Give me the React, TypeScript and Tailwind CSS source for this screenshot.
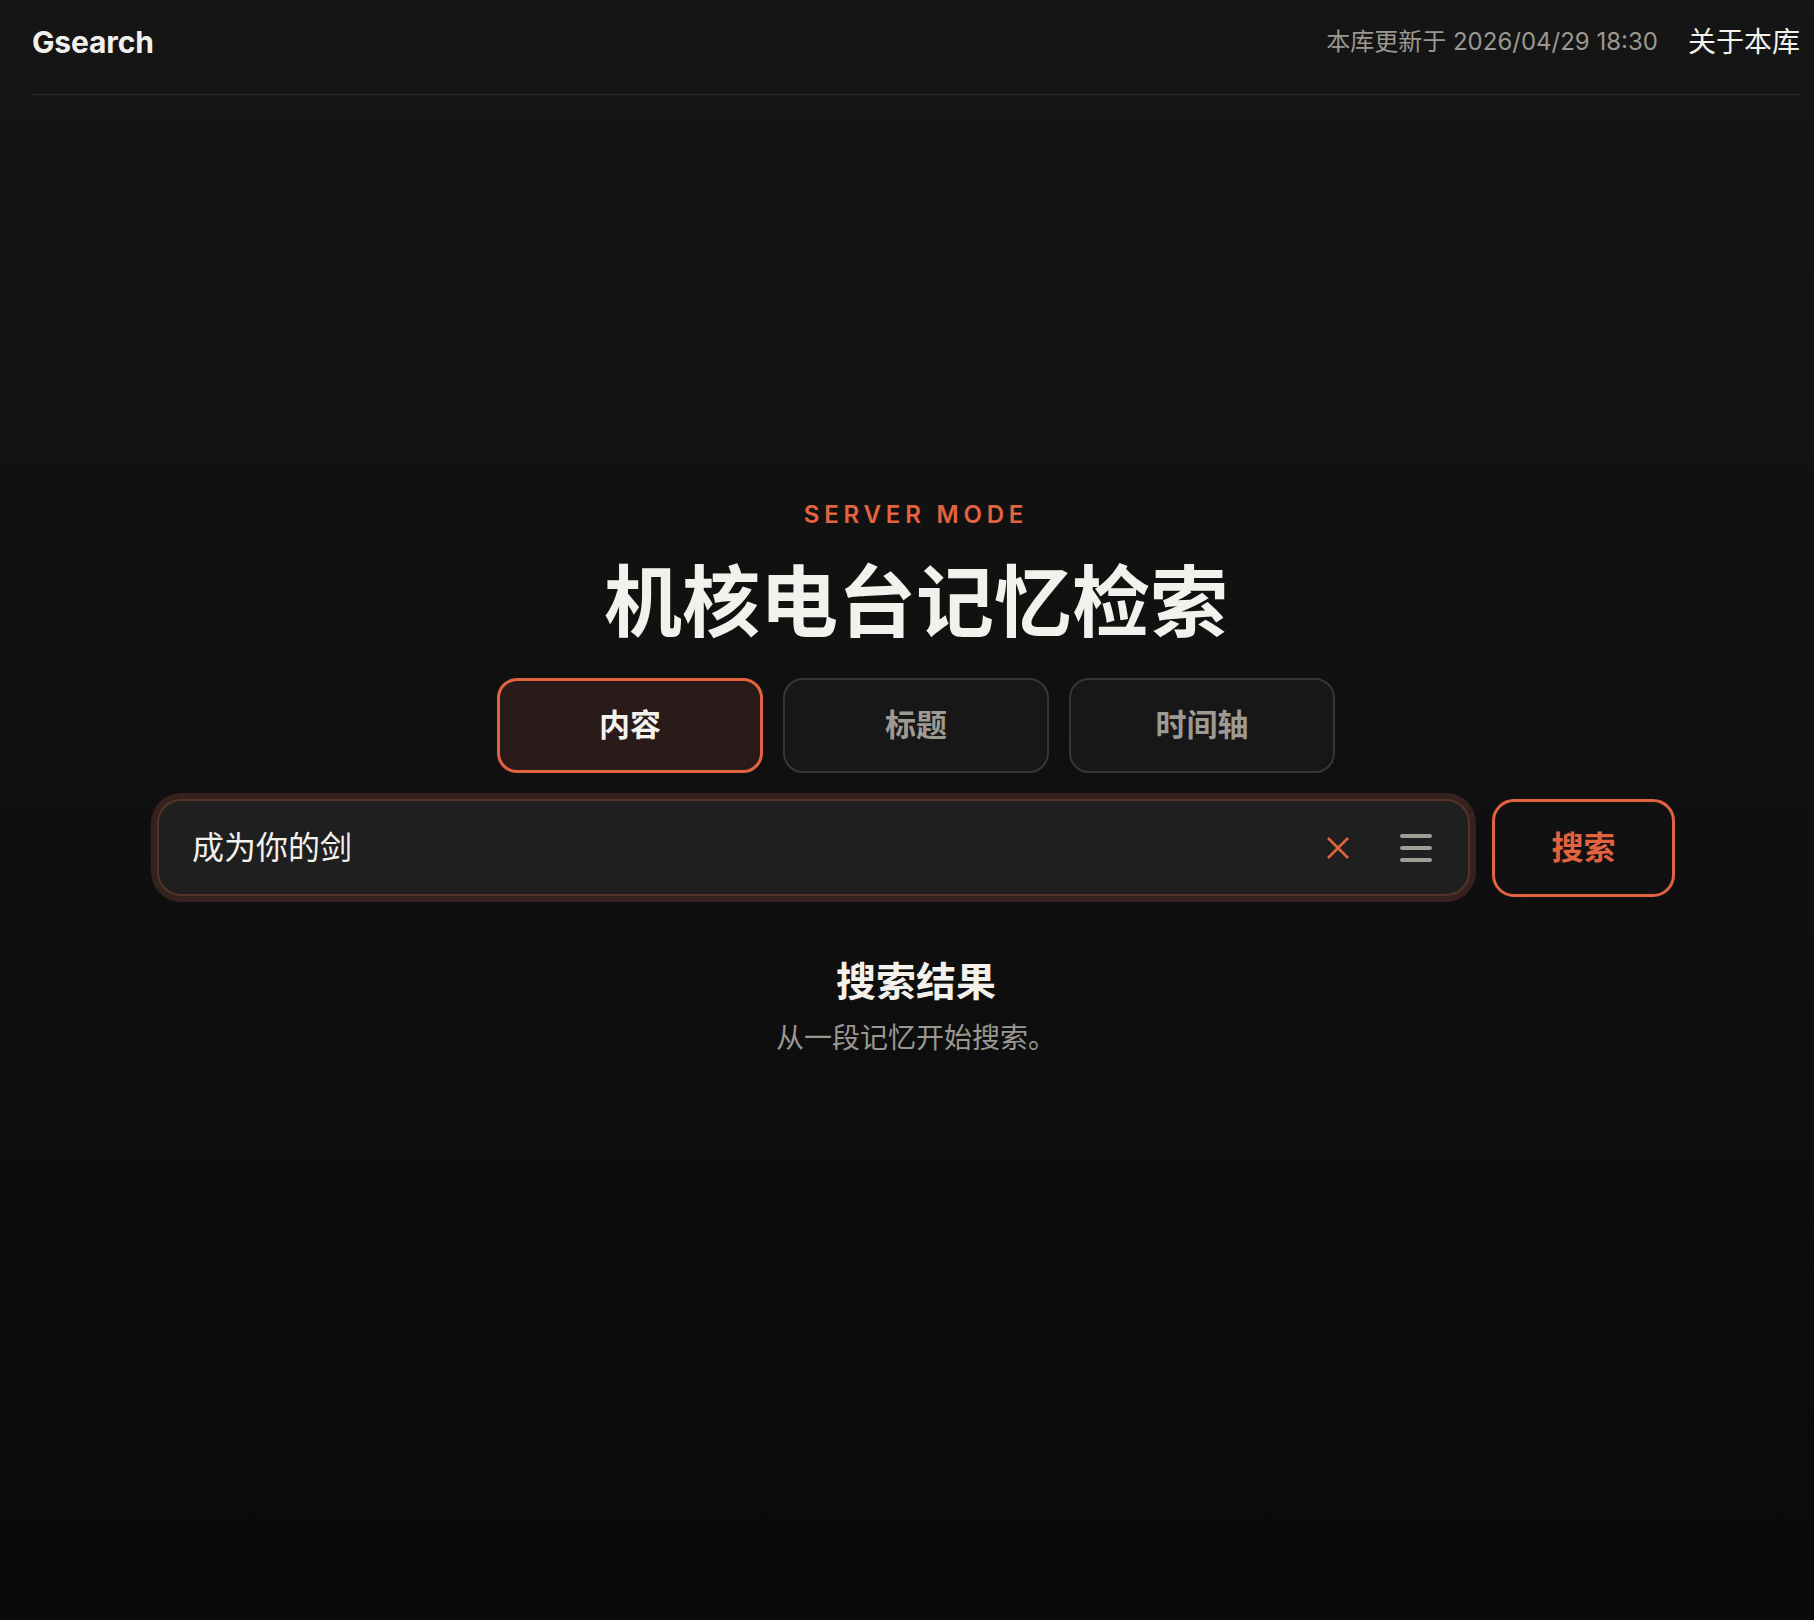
import React, {useState} from 'react';

const FONT = "font-['Inter','Noto_Sans_CJK_SC',sans-serif]";

type Mode = {
    key: string;
    label: string;
};

const MODES: Mode[] = [
    {key: 'content', label: '内容'},
    {key: 'title', label: '标题'},
    {key: 'timeline', label: '时间轴'},
];

const Header = () => (
    <header className="h-[95px] flex items-center justify-between pb-[10px] border-b border-[#292929]">
        <div className="text-[30px] font-bold text-[#f1f0eb] tracking-[-0.005em]">Gsearch</div>
        <div className="flex items-center gap-[30px]">
            <span className="text-[24px] text-[#9b9892]">本库更新于 2026/04/29 18:30</span>
            <a className="text-[28px] text-[#f2f1ec] cursor-pointer">关于本库</a>
        </div>
    </header>
);

const ModeTabs = ({active, onChange}: {active: string; onChange: (key: string) => void}) => (
    <div className="flex justify-center gap-[20px] mt-[28px]">
        {MODES.map((mode) => (
            <button
                key={mode.key}
                onClick={() => onChange(mode.key)}
                className={
                    mode.key === active
                        ? 'w-[266px] h-[95px] rounded-[20px] border-[3px] border-[#e2633f] bg-[#2a1a19] text-[31px] font-bold text-[#f4f2ed]'
                        : 'w-[266px] h-[95px] rounded-[20px] border-2 border-[#363636] bg-[#171717] text-[31px] font-bold text-[#9d9a93]'
                }
            >
                {mode.label}
            </button>
        ))}
    </div>
);

const SearchBar = () => {
    const [query, setQuery] = useState('成为你的剑');

    return (
        <div className="w-[1518px] mx-auto mt-[26px] flex gap-[22px]">
            <div className="flex-1 h-[97px] flex items-center rounded-[24px] bg-[#1f1f1f] border-2 border-[#56332a] shadow-[0_0_0_6px_#35221e] pl-[33px] pr-[36px]">
                <input
                    value={query}
                    onChange={(e) => setQuery(e.target.value)}
                    className="flex-1 bg-transparent outline-none text-[32px] text-[#f2f1ec]"
                />
                <button onClick={() => setQuery('')} className="w-[24px] h-[24px] flex items-center justify-center mr-[50px]">
                    <svg width="24" height="24" viewBox="0 0 24 24" fill="none" stroke="#e2633f" strokeWidth="2.6">
                        <path d="M2 2 L22 22 M22 2 L2 22"/>
                    </svg>
                </button>
                <button className="w-[32px] h-[30px] flex items-center justify-center">
                    <svg width="32" height="30" viewBox="0 0 32 30" fill="none" stroke="#a09d95" strokeWidth="4" strokeLinecap="round">
                        <path d="M2 3 H30 M2 15 H30 M2 27 H30"/>
                    </svg>
                </button>
            </div>
            <button className="w-[183px] h-[98px] rounded-[22px] border-[3px] border-[#e2633f] bg-[#111111] text-[32px] font-bold text-[#e2633f]">
                搜索
            </button>
        </div>
    );
};

export default function App() {
    const [mode, setMode] = useState('content');

    return (
        <div className={`${FONT} min-h-screen h-[1620px] bg-gradient-to-b from-[#151515] to-[#0a0a0a] pl-8 pr-[14px]`}>
            <Header/>
            <main className="pt-[404px] flex flex-col">
                <div className="text-center text-[24px] leading-[32px] font-semibold tracking-[0.2em] text-[#e2633f]">
                    SERVER MODE
                </div>
                <h1 className="mt-[25px] text-center text-[78px] leading-[94px] font-bold text-[#f2f1ec]">
                    机核电台记忆检索
                </h1>
                <ModeTabs active={mode} onChange={setMode}/>
                <SearchBar/>
                <section className="mt-[60px] flex flex-col items-center">
                    <h2 className="text-[40px] leading-[50px] font-bold text-[#f2f1ec]">搜索结果</h2>
                    <p className="mt-[12px] text-[28px] leading-[38px] text-[#9b9892]">从一段记忆开始搜索。</p>
                </section>
            </main>
        </div>
    );
}
